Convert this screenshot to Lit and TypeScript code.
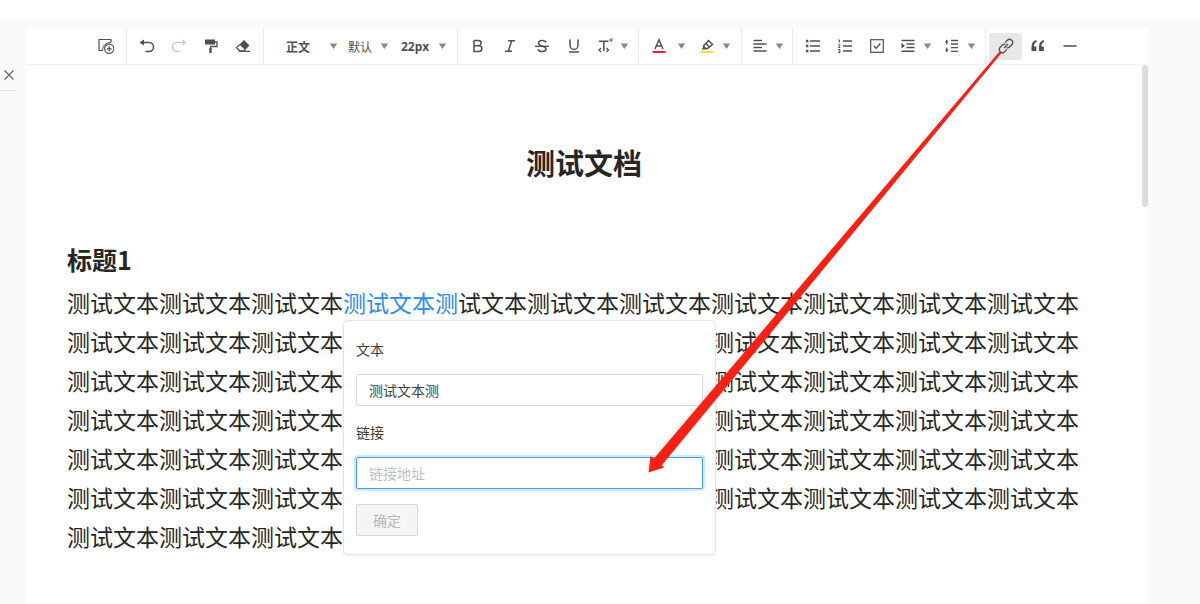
import { LitElement, html, svg, css } from "lit";
import { customElement, property, state } from "lit/decorators.js";
import { classMap } from "lit/directives/class-map.js";

const line = (d: string) => svg`<path d=${d} fill="none" stroke="currentColor" stroke-width="1.3"/>`;
const bold = (d: string) => svg`<path d=${d} fill="none" stroke="currentColor" stroke-width="1.5"/>`;
const fill = (d: string) => svg`<path d=${d} fill="currentColor"/>`;

const ICONS: Record<string, unknown> = {
  insert: svg`<path d="M4.500 12.500H1V1.500H13V4.500" fill="none" stroke="currentColor" stroke-width="1.200"/><path d="M4.500 13C4.500 8 7.500 4.500 13 4.500" fill="none" stroke="currentColor" stroke-width="1"/><circle cx="11.200" cy="10.800" r="4.600" fill="#fff" stroke="currentColor" stroke-width="1.200"/>${line("M8.700 10.800H13.700M11.200 8.300V13.300")}`,
  undo: svg`${bold("M2 4.500H10A4.500 4.500 0 0 1 10 13.500H6.500")}${fill("M.5 4.500L5 1.500V7.500Z")}`,
  redo: svg`${bold("M14 4.500H6A4.500 4.500 0 0 0 6 13.500H9.500")}${line("M11.500 2L14.300 4.500L11.500 7")}`,
  painter: svg`${fill("M2 1.500H12V6.500H2Z")}${line("M12 4H14V8.500H7.500V10.500")}${fill("M6.300 10H8.700V15H6.300Z")}`,
  eraser: svg`${fill("M9 2L14.500 7.500L10 12L4.500 6.500Z")}${line("M4.800 6.500L1.500 9.500L4.500 12.800H9L10.500 11.500M4 13.300H15")}`,
  bold: bold("M4 2.500H8.500A2.600 2.600 0 0 1 8.500 7.700H4M4 7.700H9A2.900 2.900 0 0 1 9 13.500H4V2.500"),
  italic: bold("M6 2.700H13M3 13.300H10M9.700 2.700L6.300 13.300"),
  strike: svg`${bold("M12 4.500C11 1.500 4.500 1.800 4.500 5C4.500 7 6.500 7.500 8 8M8 8C10.500 8.600 12 9.300 12 11C12 14.200 5 14.600 4 11.300")}${line("M1 8.300H15")}`,
  underline: svg`${bold("M4 1.500V7.500A4 4 0 0 0 12 7.500V1.500")}${bold("M3 14H13")}`,
  more: svg`${bold("M2 3.200H11.500M6.800 3.200V13")}${line("M4 10L2 12L4 14M9.500 10L11.500 12L9.500 14")}<circle cx="14" cy="2" r="1.200" fill="none" stroke="currentColor"/>`,
  color: svg`${bold("M4 11L8 1.800L12 11M5.300 8H10.700")}<path d="M1.500 13H14.500V15H1.500Z" fill="#f5222d"/>`,
  highlight: svg`${bold("M4.500 8L9.500 2.500L13.500 6.500L8.500 10.500L5.500 10.500ZM7 5.500L10.500 9")}${fill("M5 8L8 11L2.500 11.800Z")}<path d="M1.500 13H14V15H1.500Z" fill="#f7e51c"/>`,
  align: bold("M1.500 2.500H10M1.500 6H14.500M1.500 9.500H10M1.500 13H14.500"),
  bullets: svg`${bold("M5 3H15M5 8H15M5 13H15")}${fill("M1 1.800H3.400V4.200H1ZM1 6.800H3.400V9.200H1ZM1 11.800H3.400V14.200H1Z")}`,
  numbers: svg`${line("M6 3H15M6 8H15M6 13H15")}<path d="M1 2H2.500V4.500M1 6.800H3V8L1.200 9.500H3.300M1 11.500H3V14.500H1M1.500 13H3" fill="none" stroke="currentColor" stroke-width=".9"/>`,
  check: svg`<rect x="1.700" y="1.700" width="12.600" height="12.600" fill="none" stroke="currentColor" stroke-width="1.200"/>${line("M4.800 8L7.200 10.300L11.300 5.500")}`,
  indent: svg`${bold("M1.500 2.500H14.500M6.500 6H14.500M6.500 9.500H14.500M1.500 13.200H14.500")}${fill("M1.500 5L5 7.800L1.500 10.600Z")}`,
  spacing: svg`${line("M7 2.500H14M7 6H14M7 9.700H14M7 13.300H14M2.700 3V6.500M2.700 9.500V13")}${fill("M2.700 1.500L4.500 4.300H.9ZM2.700 14.500L4.500 11.700H.9Z")}`,
  link: svg`${line("M6 10L10 6M7 4.600L9.300 2.300A3.100 3.100 0 0 1 13.700 6.700L11.400 9A3 3 0 0 1 8.500 9.700M9 11.400L6.700 13.700A3.100 3.100 0 0 1 2.300 9.300L4.600 7A3 3 0 0 1 7.500 6.300")}`,
  quote: fill("M6.300 2C3 3 1.500 5.500 1.500 9V13H6.300V8.500H3.900C3.900 6.300 4.700 4.700 6.700 3.700ZM13.800 2C10.500 3 9 5.500 9 9V13H13.800V8.500H11.400C11.400 6.300 12.200 4.700 14.200 3.700Z"),
  rule: bold("M1.500 8H14.500"),
};

const caret = html`<svg class="caret" width="9" height="16" viewBox="0 0 9 16" aria-hidden="true"><path d="M.8 5.500H8.200L4.500 11Z" fill="#888"/></svg>`;

@customElement("tool-button")
class ToolButton extends LitElement {
  @property() icon = "";
  @property() label = "";
  @property({ type: Boolean }) menu = false;
  @property({ type: Boolean }) wide = false;
  @property({ type: Boolean }) active = false;
  @property({ type: Boolean }) disabled = false;

  static styles = css`
    :host { display: flex; align-items: center; }
    .tool {
      display: flex; align-items: center; justify-content: center;
      width: 32px; height: 27px; padding: 0; border: 0; border-radius: 3px;
      background: transparent; color: #4f4f4f;
    }
    .tool.menu { width: 44px; justify-content: space-between; padding: 0 5px 0 7px; }
    .tool.wide { width: 48px; padding-right: 6px; }
    .tool.active { width: 33px; background: #e8e8e8; }
    .tool:disabled { color: #c8c8c8; }
  `;

  render() {
    const cls = { tool: true, menu: this.menu, wide: this.wide, active: this.active };
    return html`<button class=${classMap(cls)} aria-label=${this.label} ?disabled=${this.disabled}>
      <svg width="16" height="16" viewBox="0 0 16 16" aria-hidden="true">${ICONS[this.icon]}</svg>${this.menu ? caret : ""}
    </button>`;
  }
}

@customElement("link-form")
class LinkForm extends LitElement {
  @property() text = "";
  @state() private url = "";

  static styles = css`
    .form {
      box-sizing: border-box; display: flex; flex-direction: column;
      padding: 17px 12px 18px; border: 1px solid #e6e6e6; border-radius: 4px;
      background: #fff; box-shadow: 0 1px 3px rgba(0, 0, 0, 0.06);
      font-size: 14px; line-height: 22px; color: #404040;
    }
    label { margin-bottom: 14px; }
    .field {
      box-sizing: border-box; width: 100%; height: 32px; margin: 0 0 15px; padding: 0 12px;
      border: 1px solid #d9d9d9; border-radius: 2px; outline: 0; background: #fff;
      font: inherit; color: #404040;
    }
    .field::placeholder { color: #bfbfbf; opacity: 1; }
    .current { border-color: #40a0f0; box-shadow: 0 0 0 2px rgba(24, 144, 255, 0.2); }
    .submit {
      align-self: flex-start; height: 32px; padding: 0 16px;
      border: 1px solid #d9d9d9; border-radius: 2px; background: #f5f5f5;
      font: inherit; color: #b8b8b8;
    }
  `;

  render() {
    return html`<form class="form" @submit=${(e: Event) => e.preventDefault()}>
      <label for="text">文本</label>
      <input class="field" id="text" .value=${this.text}>
      <label for="url">链接</label>
      <input class="field current" id="url" placeholder="链接地址" autocomplete="off"
        @input=${(e: Event) => (this.url = (e.target as HTMLInputElement).value)}>
      <button class="submit" ?disabled=${!this.url}>确定</button>
    </form>`;
  }
}

@customElement("app-root")
class AppRoot extends LitElement {
  static styles = css`
    :host {
      display: block; position: relative; min-height: 100vh; padding-top: 19px;
      box-sizing: border-box; overflow: hidden; background: #fff; color: #262626;
      font-family: "Noto Sans CJK SC", "Noto Sans", sans-serif;
    }
    .page {
      display: grid; grid-template-columns: 26px minmax(0, 1fr) 52px;
      min-height: calc(100vh - 19px); background: #fafafa;
    }
    .side { padding-top: 45px; }
    .close {
      display: flex; align-items: center; width: 16px; height: 27px; padding: 0 0 4px 3px;
      border: 0; border-bottom: 1px solid #e2e2e2; background: transparent; color: #666;
      box-sizing: border-box;
    }
    .editor { display: flex; flex-direction: column; padding-top: 9px; }
    .bar {
      display: flex; height: 36px; padding-left: 60px;
      border-bottom: 1px solid #f0f0f0; background: #fff;
    }
    .group { display: flex; align-items: center; padding: 0 4px; border-right: 1px solid #ececec; }
    .group.roomy { padding: 0 5px; }
    .group.tight { padding: 0 3px; }
    .group:last-child { border-right: 0; }
    .pick { display: grid; align-items: center; width: 51px; }
    .pick select {
      grid-area: 1 / 1; appearance: none; width: 100%; height: 27px; padding: 0 0 0 6px;
      border: 0; background: transparent; color: #505050;
      font-family: inherit; font-size: 12px;
    }
    .pick .caret { grid-area: 1 / 1; justify-self: end; margin-right: 4px; pointer-events: none; }
    .pick.style { width: 74px; }
    .pick.style select { padding-left: 18px; font-weight: 700; }
    .pick.size { width: 60px; }
    .pick.size select { padding-left: 8px; font-family: "Open Sans", sans-serif; font-weight: 700; }
    .pick.size .caret { margin-right: 6px; }
    .sheet { flex: 1; display: flex; align-items: flex-start; background: #fff; }
    .doc { flex: 1; min-width: 0; padding: 75px 41px 40px; }
    .thumb { width: 6px; height: 142px; border-radius: 3px; background: #dcdcdc; }
    h1 { margin: 0 0 55px; font-size: 29px; line-height: 44px; text-align: center; }
    h2 { margin: 0 0 4px; font-size: 25px; line-height: 40px; }
    .text { font-size: 23px; line-height: 39px; word-break: break-all; }
    .marked { position: relative; color: #2b8cf0; }
    .popup { position: absolute; left: 0; top: 35px; width: 373px; }
    .arrow { position: absolute; left: 0; top: 0; pointer-events: none; }
  `;

  render() {
    const unit = "测试文本";
    return html`
      <div class="page">
        <aside class="side">
          <button class="close" aria-label="关闭">
            <svg width="12" height="12" viewBox="0 0 12 12"><path d="M1.500 1.500L10.500 10.500M10.500 1.500L1.500 10.500" stroke="currentColor" stroke-width="1.200"/></svg>
          </button>
        </aside>
        <main class="editor">
          <div class="bar" role="toolbar">
            <div class="group"><tool-button icon="insert" label="插入"></tool-button></div>
            <div class="group">
              <tool-button icon="undo" label="撤销"></tool-button>
              <tool-button icon="redo" label="重做" disabled></tool-button>
              <tool-button icon="painter" label="格式刷"></tool-button>
              <tool-button icon="eraser" label="清除格式"></tool-button>
            </div>
            <div class="group">
              <label class="pick style"><select aria-label="段落样式"><option>正文</option></select>${caret}</label>
              <label class="pick"><select aria-label="字体"><option>默认</option></select>${caret}</label>
              <label class="pick size"><select aria-label="字号"><option>22px</option></select>${caret}</label>
            </div>
            <div class="group">
              <tool-button icon="bold" label="粗体"></tool-button>
              <tool-button icon="italic" label="斜体"></tool-button>
              <tool-button icon="strike" label="删除线"></tool-button>
              <tool-button icon="underline" label="下划线"></tool-button>
              <tool-button icon="more" label="更多文本样式" menu></tool-button>
            </div>
            <div class="group roomy">
              <tool-button icon="color" label="字体颜色" menu wide></tool-button>
              <tool-button icon="highlight" label="背景颜色" menu></tool-button>
            </div>
            <div class="group tight"><tool-button icon="align" label="对齐" menu></tool-button></div>
            <div class="group">
              <tool-button icon="bullets" label="无序列表"></tool-button>
              <tool-button icon="numbers" label="有序列表"></tool-button>
              <tool-button icon="check" label="任务列表"></tool-button>
              <tool-button icon="indent" label="缩进" menu></tool-button>
              <tool-button icon="spacing" label="行高" menu></tool-button>
            </div>
            <div class="group tight">
              <tool-button icon="link" label="链接" active></tool-button>
              <tool-button icon="quote" label="引用"></tool-button>
              <tool-button icon="rule" label="分割线"></tool-button>
            </div>
          </div>
          <div class="sheet">
            <article class="doc">
              <h1>测试文档</h1>
              <h2>标题1</h2>
              <div class="text">${unit.repeat(3)}<span class="marked">测试文本测<link-form class="popup" text="测试文本测"></link-form></span>试文本${unit.repeat(64)}</div>
            </article>
            <div class="thumb"></div>
          </div>
        </main>
      </div>
      <svg class="arrow" width="1010" height="480" viewBox="0 0 1010 480" aria-hidden="true">
        <path d="M999.500 51.500L1001.500 53L662 465L664 467.500L648.500 472.500L650.500 456L654 458.500Z" fill="#fb1f14"/>
      </svg>
    `;
  }
}
